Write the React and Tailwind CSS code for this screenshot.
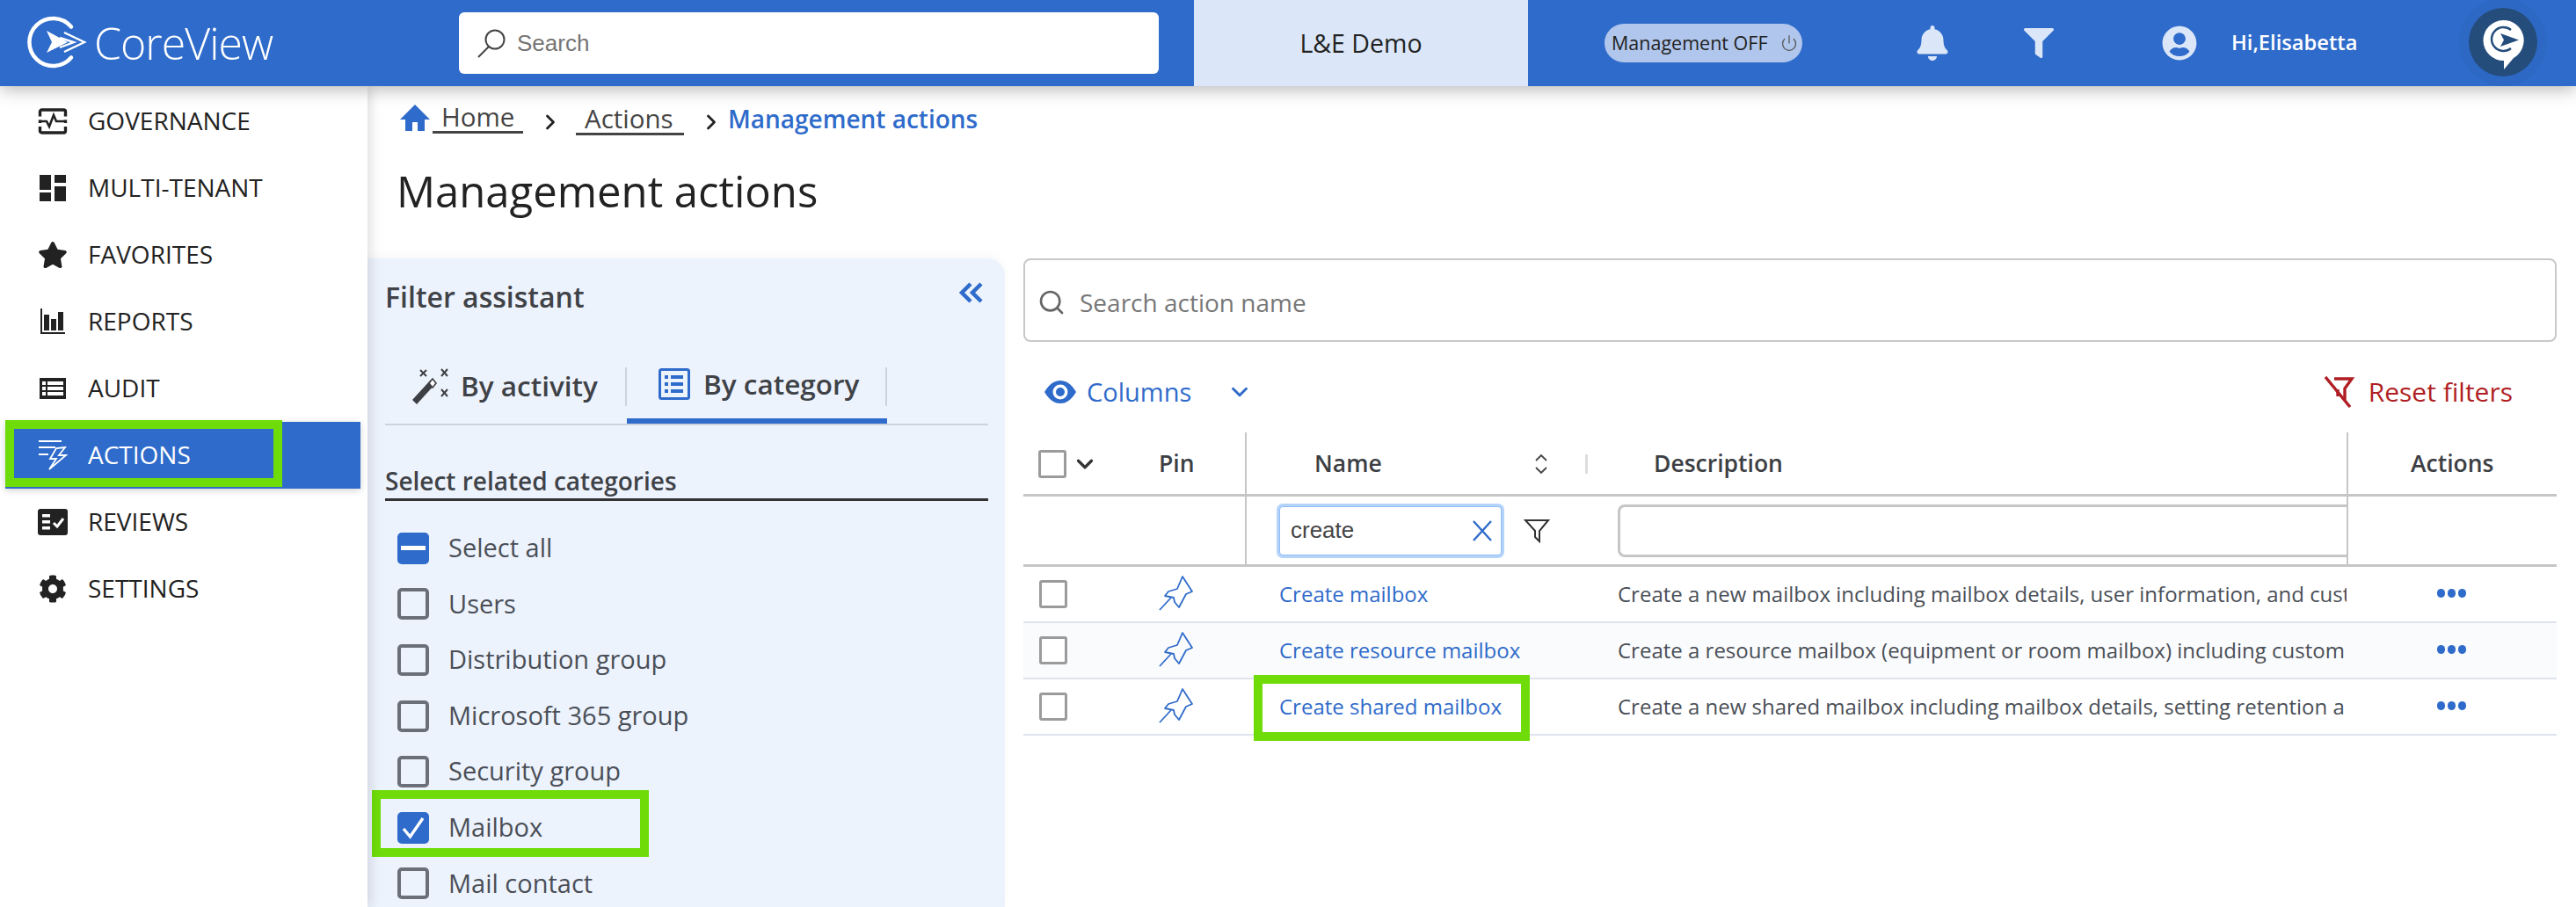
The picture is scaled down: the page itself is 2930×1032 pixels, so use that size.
import React from "react";
import { FaBell, FaFilter, FaUserCircle, FaStar, FaCog } from "react-icons/fa";
import { Power, ChevronRight, ChevronDown, Search } from "lucide-react";

const Logo = () => (
  <svg width="70" height="62" viewBox="0 0 70 62" className="shrink-0" fill="none">
    <path d="M51 12.5 A27 27 0 1 0 51 47.5" stroke="#fff" strokeWidth="4.5" strokeLinecap="round" />
    <path d="M23 17 L47 30 L23 42 L29 30 Z" fill="#fff" />
    <path d="M43 19 L66 30 L43 41 M38 25 L54 30 L38 36" stroke="#fff" strokeWidth="2.4" />
  </svg>
);

const Avatar = () => (
  <div className="w-[100px] h-[100px] -mt-[2px] rounded-full bg-[#2d68c4] flex items-center justify-center shrink-0">
    <div className="w-[78px] h-[78px] rounded-full bg-[#254d7c] flex items-center justify-center">
      <svg width="48" height="58" viewBox="0 0 48 58" className="mt-[6px]">
        <path d="M24 1 A23 23 0 0 1 36 44 L25 57 L25 47 A23 23 0 0 1 24 1 Z" fill="#fff" />
        <path d="M33 12 A13.5 13.5 0 1 0 33 33" fill="none" stroke="#254d7c" strokeWidth="2.5" />
        <path d="M21 16 L42 23.5 L21 31 L25 23.5 Z" fill="#254d7c" />
      </svg>
    </div>
  </div>
);

const Governance = () => (
  <svg width="36" height="36" viewBox="0 0 36 36" fill="none">
    <rect x="3.5" y="5" width="29" height="26" rx="2" stroke="#222" strokeWidth="3.4" />
    <path d="M1 14.5 H6 M1 22 H6 M30 14.5 H35 M30 22 H35" stroke="#fff" strokeWidth="4" />
    <path d="M2 18 H11 L14 24 L19 11 L22 18 H34" stroke="#222" strokeWidth="2.6" fill="none" />
  </svg>
);
const MultiTenant = () => (
  <svg width="36" height="36" viewBox="0 0 36 36" fill="#222">
    <rect x="3" y="3" width="13" height="17" />
    <rect x="20" y="3" width="13" height="9" />
    <rect x="20" y="16" width="13" height="17" />
    <rect x="3" y="23" width="13" height="10" />
  </svg>
);
const Reports = () => (
  <svg width="36" height="36" viewBox="0 0 36 36" fill="#222">
    <rect x="4" y="3" width="2" height="29" />
    <rect x="4" y="30" width="28" height="2" />
    <rect x="8" y="10" width="6" height="18" />
    <rect x="16" y="15" width="6" height="13" />
    <rect x="24" y="7" width="6" height="21" />
  </svg>
);
const Audit = () => (
  <svg width="36" height="36" viewBox="0 0 36 36">
    <rect x="3" y="6" width="30" height="24" fill="#222" />
    <g fill="#fff">
      <rect x="6" y="10" width="4" height="4" />
      <rect x="12" y="10" width="18" height="4" />
      <rect x="6" y="16" width="4" height="4" />
      <rect x="12" y="16" width="18" height="4" />
      <rect x="6" y="22" width="4" height="4" />
      <rect x="12" y="22" width="18" height="4" />
    </g>
  </svg>
);
const ActionsIcon = () => (
  <svg width="36" height="36" viewBox="0 0 36 36" fill="none" stroke="#fff" strokeWidth="1.8">
    <path d="M2 2 H28 M2 9 H21 M2 17 H13" />
    <path d="M32 9 L22 10 L15 22 H22 L14 34 L33 18 H25 Z" />
  </svg>
);
const Reviews = () => (
  <svg width="36" height="36" viewBox="0 0 36 36">
    <rect x="1" y="3" width="34" height="30" rx="3" fill="#222" />
    <g fill="#fff">
      <rect x="6" y="9" width="9" height="3.5" />
      <rect x="6" y="16" width="9" height="3.5" />
      <rect x="6" y="23" width="9" height="3.5" />
    </g>
    <path d="M19 19 L23 23 L30 14" stroke="#fff" strokeWidth="3" fill="none" />
  </svg>
);

const NavRow = ({ icon, label, active, children }) => (
  <div className={`relative h-[76px] flex items-center mr-[8px] ml-[6px] ${active ? "bg-[#2f6bca] shadow-[0_2px_8px_rgba(0,0,0,0.18)]" : ""}`}>
    <span className="w-[36px] h-[36px] ml-[36px] flex items-center justify-center shrink-0">{icon}</span>
    <span className={`ml-[22px] -mt-[2px] text-[28px] ${active ? "text-white" : "text-[#222]"}`}>{label}</span>
    {children}
  </div>
);

const Box = ({ state }) => (
  <span className={`w-[36px] h-[36px] rounded-[5px] shrink-0 flex items-center justify-center ${state ? "bg-[#2f6bca]" : "border-[4px] border-[#6b7078]"}`}>
    {state === "mixed" && <span className="w-[28px] h-[5px] bg-white" />}
    {state === "checked" && (
      <svg width="28" height="28" viewBox="0 0 28 28" fill="none">
        <path d="M3 15 L10.5 24 L25 3" stroke="#fff" strokeWidth="3.4" />
      </svg>
    )}
  </span>
);

const Category = ({ label, state, children }) => (
  <div className="relative h-[63.6px] flex items-center pl-[14px] gap-[22px] text-[29px] text-[#4a4f57]">
    <Box state={state} />
    <span className="-mt-[2px]">{label}</span>
    {children}
  </div>
);

const RowBox = () => <span className="w-[32px] h-[32px] rounded-[3px] border-[3px] border-[#9b9b9b] bg-white shrink-0" />;

const Pin = () => (
  <svg width="40" height="40" viewBox="0 0 40 40" fill="none" stroke="#2f6bca" strokeWidth="1.8" strokeLinejoin="round" className="-mt-[3px]">
    <path d="M27 1 L38 18 L31 21 L23 36 L18 30 L17 25 L7 23 L11 18 L21 15 Z" />
    <path d="M14 25 L1 39" />
  </svg>
);

const Funnel = () => (
  <svg width="30" height="28" viewBox="0 0 30 28" fill="none" stroke="#333" strokeWidth="2">
    <path d="M2 2 H28 L18 14 V26 L13 21 V14 Z" />
  </svg>
);

const Dots = () => (
  <span className="flex gap-[3px] -mt-[3px]">
    <span className="w-[9px] h-[10px] rounded-full bg-[#2f6bca]" />
    <span className="w-[9px] h-[10px] rounded-full bg-[#2f6bca]" />
    <span className="w-[9px] h-[10px] rounded-full bg-[#2f6bca]" />
  </span>
);

const Row = ({ name, desc, zebra, children }) => (
  <div className={`flex h-[64px] items-center border-b-[2px] border-[#dfe3ed] ${zebra ? "bg-[#fafbfc]" : ""}`}>
    <div className="w-[124px] pl-[18px] flex items-center"><RowBox /></div>
    <div className="w-[128px] pl-[30px] flex items-center"><Pin /></div>
    <div className="relative w-[424px] pl-[39px] text-[24px] text-[#2f6bca] h-full flex items-center">
      {name}
      {children}
    </div>
    <div className="w-[829px] text-[24px] text-[#4a4f57] whitespace-nowrap overflow-hidden">{desc}</div>
    <div className="w-[239px] flex items-center pl-[103px]"><Dots /></div>
  </div>
);

export default function App() {
  return (
    <div className="w-[2930px] h-[1032px] overflow-hidden flex flex-col bg-white font-['Open_Sans','DejaVu_Sans',sans-serif] text-[#222]">
      <header className="relative z-20 h-[98px] shrink-0 flex items-center bg-[#2f6bca] shadow-[0_4px_18px_rgba(0,0,0,0.28)]">
        <div className="w-[522px] shrink-0 pl-[30px] flex items-center gap-[7px]">
          <Logo />
          <span className="text-[50px] font-light text-white tracking-[-1px] leading-none">CoreView</span>
        </div>
        <div className="w-[796px] h-[70px] shrink-0 rounded-[6px] bg-white flex items-center pl-[20px] gap-[12px]">
          <svg width="34" height="34" viewBox="0 0 34 34" fill="none" stroke="#444" strokeWidth="2" className="shrink-0">
            <circle cx="21" cy="13" r="10.5" />
            <path d="M14 21 L2 33" />
          </svg>
          <span className="text-[26px] text-[#757575] font-['Liberation_Sans',sans-serif]">Search</span>
        </div>
        <div className="ml-[40px] w-[380px] h-full shrink-0 bg-[#dbe7f8] flex items-center justify-center text-[28.5px] text-[#222]">L&amp;E Demo</div>
        <div className="ml-[87px] w-[225px] h-[44px] shrink-0 rounded-full bg-[#b0c6ec] flex items-center pl-[8px] gap-[14px] text-[21.5px] text-[#222]">
          <span>Management OFF</span>
          <Power className="w-[20px] h-[20px] text-[#555]" strokeWidth={1.5} />
        </div>
        <FaBell className="ml-[130px] w-[36px] h-[40px] text-[#dbe7f8] shrink-0" />
        <FaFilter className="ml-[86px] w-[34px] h-[34px] text-[#dbe7f8] shrink-0" />
        <FaUserCircle className="ml-[123px] w-[40px] h-[40px] text-[#dbe7f8] shrink-0" />
        <span className="ml-[39px] text-[23.7px] font-semibold text-white whitespace-nowrap">Hi,Elisabetta</span>
        <div className="ml-[116px]"><Avatar /></div>
      </header>

      <div className="flex flex-1 min-h-0">
        <aside className="relative z-10 w-[418px] shrink-0 bg-white pt-[2px] shadow-[4px_0_12px_rgba(0,0,0,0.12)]">
          <NavRow icon={<Governance />} label="GOVERNANCE" />
          <NavRow icon={<MultiTenant />} label="MULTI-TENANT" />
          <NavRow icon={<FaStar className="w-[34px] h-[34px] text-[#222]" />} label="FAVORITES" />
          <NavRow icon={<Reports />} label="REPORTS" />
          <NavRow icon={<Audit />} label="AUDIT" />
          <NavRow icon={<ActionsIcon />} label="ACTIONS" active>
            <div className="absolute left-0 top-[-2px] w-[315px] h-[76px] border-[10px] border-[#6fdc0a]" />
          </NavRow>
          <NavRow icon={<Reviews />} label="REVIEWS" />
          <NavRow icon={<FaCog className="w-[32px] h-[32px] text-[#222]" />} label="SETTINGS" />
        </aside>

        <main className="flex-1 min-w-0 flex flex-col">
          <nav className="h-[78px] shrink-0 flex items-start pt-[17px] pl-[36px] text-[#444]">
            <svg width="34" height="30" viewBox="0 0 34 30" fill="#2f6bca" className="mt-[4px] ml-[1px] mr-[1px] shrink-0">
              <path d="M17 0 L34 17 H28 V30 H20 V20 H14 V30 H6 V17 H0 Z" />
            </svg>
            <span className="ml-[2px] px-[10px] w-[103px] h-[37px] border-b-[3px] border-[#444] text-[29.5px] leading-[36px]">Home</span>
            <ChevronRight className="ml-[17px] mt-[10px] w-[28px] h-[28px] text-[#222]" strokeWidth={2.4} />
            <span className="ml-[15px] px-[10px] w-[123px] h-[39px] border-b-[3px] border-[#444] text-[29.5px] leading-[40px] whitespace-nowrap">Actions</span>
            <ChevronRight className="ml-[17px] mt-[10px] w-[28px] h-[28px] text-[#222]" strokeWidth={2.4} />
            <span className="ml-[5px] text-[28px] leading-[40px] font-semibold text-[#2f6bca] whitespace-nowrap">Management actions</span>
          </nav>
          <h1 className="h-[118px] shrink-0 pl-[33px] pt-[5px] text-[49px] leading-[72px] font-normal text-[#222]">Management actions</h1>

          <div className="flex flex-1 min-h-0">
            <section className="w-[725px] shrink-0 rounded-tr-[20px] bg-[#edf3fd] pl-[20px] pr-[19px] shadow-[0_-4px_10px_rgba(0,0,0,0.03)]">
              <div className="h-[90px] flex items-center justify-between pr-[6px]">
                <span className="text-[32px] font-semibold text-[#3f4247] -mt-[2px]">Filter assistant</span>
                <svg width="28" height="24" viewBox="0 0 28 24" fill="none" stroke="#2f6bca" strokeWidth="4.5" className="mb-[12px]">
                  <path d="M14 2 L4 12 L14 22 M26 2 L16 12 L26 22" />
                </svg>
              </div>
              <div className="h-[100px] flex items-end border-b-[2px] border-[#ccd3de]">
                <div className="w-[275px] h-[64px] pb-[20px] flex items-center pl-[30px] relative">
                  <svg width="44" height="44" viewBox="0 0 44 44" className="shrink-0">
                    <path d="M1 37 L22 14 L27 19 L6 42 Z" fill="#3d3f44" />
                    <path d="M20 18 L24 13 L28 18 L24 23 Z" fill="#fff" stroke="#3d3f44" strokeWidth="1.6" />
                    <path d="M10 3 L17 10 M17 3 L10 10 M34 2 L41 10 M41 2 L34 10 M34 25 L41 33 M41 25 L34 33" stroke="#3d3f44" strokeWidth="2" />
                  </svg>
                  <span className="ml-[12px] text-[31.5px] font-semibold text-[#3f4247] whitespace-nowrap -mt-[2px]">By activity</span>
                  <span className="absolute right-0 top-0 bottom-[20px] w-[2px] bg-[#ccd3de]" />
                </div>
                <div className="relative w-[296px] h-[64px] pb-[20px] flex items-center pl-[36px] border-b-[6px] border-[#2f6bca]">
                  <svg width="36" height="36" viewBox="0 0 36 36" className="shrink-0">
                    <rect x="1.5" y="1.5" width="33" height="33" rx="2" fill="#edf3fd" stroke="#2f6bca" strokeWidth="3" />
                    <g fill="#2f6bca">
                      <rect x="7" y="8" width="4" height="4" />
                      <rect x="14" y="8" width="14" height="4" />
                      <rect x="7" y="16" width="4" height="4" />
                      <rect x="14" y="16" width="14" height="4" />
                      <rect x="7" y="24" width="4" height="4" />
                      <rect x="14" y="24" width="14" height="4" />
                    </g>
                  </svg>
                  <span className="ml-[15px] text-[31.5px] font-semibold text-[#3f4247] whitespace-nowrap">By category</span>
                  <span className="absolute right-0 top-0 bottom-[14px] w-[2px] bg-[#ccd3de]" />
                </div>
              </div>
              <div className="mt-[43px] h-[43px] border-b-[3px] border-[#333] text-[28px] leading-[40px] font-semibold text-[#3f4247] whitespace-nowrap">Select related categories</div>
              <div className="mt-[22px]">
                <Category label="Select all" state="mixed" />
                <Category label="Users" />
                <Category label="Distribution group" />
                <Category label="Microsoft 365 group" />
                <Category label="Security group" />
                <Category label="Mailbox" state="checked">
                  <div className="absolute left-[-15px] top-[-11px] w-[315px] h-[76px] border-[10px] border-[#6fdc0a]" />
                </Category>
                <Category label="Mail contact" />
              </div>
            </section>

            <section className="flex-1 min-w-0 pl-[21px] pr-[22px]">
              <div className="h-[95px] rounded-[8px] border-[2px] border-[#c8c8c8] flex items-center pl-[14px] pt-[5px] gap-[16px] text-[28px] text-[#777]">
                <Search className="w-[32px] h-[32px] text-[#666]" strokeWidth={2} />
                <span>Search action name</span>
              </div>
              <div className="h-[103px] flex items-center pl-[24px] pr-[50px] pt-[10px] text-[29px]">
                <svg width="36" height="26" viewBox="0 0 36 26" className="shrink-0">
                  <path d="M0 13 C6 3 12 0 18 0 C24 0 30 3 36 13 C30 23 24 26 18 26 C12 26 6 23 0 13 Z" fill="#2f6bca" />
                  <circle cx="18" cy="13" r="8.5" fill="#fff" />
                  <circle cx="18" cy="13" r="5" fill="#2f6bca" />
                </svg>
                <span className="ml-[12px] text-[#2f6bca]">Columns</span>
                <ChevronDown className="ml-[40px] w-[30px] h-[30px] text-[#2f6bca]" strokeWidth={2.4} />
                <span className="ml-auto flex items-center gap-[15px] text-[#b01e24] text-[30px]">
                  <svg width="36" height="36" viewBox="0 0 36 36" fill="none" stroke="#b01e24" strokeWidth="3.4">
                    <path d="M12 3 H32 L24 14 V27" />
                    <path d="M16 15 V23" />
                    <path d="M2 1 L30 35" />
                  </svg>
                  Reset filters
                </span>
              </div>

              <div className="text-[26.5px] font-semibold text-[#3d3f44]">
                <div className="flex h-[73px] items-center pt-[2px] border-b-[3px] border-[#c6c6c6]">
                  <div className="w-[124px] pl-[17px] flex items-center">
                    <RowBox />
                    <ChevronDown className="ml-[6px] w-[30px] h-[30px] text-[#333]" strokeWidth={2.6} />
                  </div>
                  <div className="w-[128px] pl-[30px]">Pin</div>
                  <div className="w-[424px] h-[calc(100%+2px)] -mt-[2px] border-l-[2px] border-[#c6c6c6] pl-[77px] pt-[2px] flex items-center">
                    <span>Name</span>
                    <svg width="18" height="24" viewBox="0 0 18 24" fill="none" stroke="#444" strokeWidth="1.8" className="ml-[172px] shrink-0">
                      <path d="M3 8 L9 2 L15 8 M3 16 L9 22 L15 16" />
                    </svg>
                    <span className="ml-[41px] w-[3px] h-[22px] bg-[#ddd]" />
                  </div>
                  <div className="w-[829px] pl-[41px]">Description</div>
                  <div className="w-[239px] h-[calc(100%+2px)] -mt-[2px] border-l-[2px] border-[#c6c6c6] pl-[71px] pt-[2px] flex items-center">Actions</div>
                </div>
                <div className="flex h-[80px] border-b-[3px] border-[#c6c6c6]">
                  <div className="w-[252px]" />
                  <div className="w-[424px] border-l-[2px] border-[#c6c6c6] pl-[37px] flex items-center">
                    <div className="w-[253px] h-[56px] rounded-[4px] bg-white border-[1px] border-[#8fbdf5] shadow-[0_0_0_3px_#b4d4fa] flex items-center pl-[12px] pr-[9px] justify-between text-[26px] font-normal text-[#444] font-['Liberation_Sans',sans-serif]">
                      <span>create</span>
                      <svg width="24" height="24" viewBox="0 0 24 24" fill="none" stroke="#2f6bca" strokeWidth="2.4">
                        <path d="M2 1 L22 23 M22 1 L2 23" />
                      </svg>
                    </div>
                    <span className="ml-[25px]"><Funnel /></span>
                  </div>
                  <div className="w-[829px] flex items-center overflow-hidden">
                    <div className="w-full h-[60px] rounded-l-[8px] border-[3px] border-r-0 border-[#c6c6c6]" />
                  </div>
                  <div className="w-[239px] border-l-[2px] border-[#c6c6c6]" />
                </div>
              </div>
              <div className="font-normal">
                <Row name="Create mailbox" desc="Create a new mailbox including mailbox details, user information, and cust" />
                <Row zebra name="Create resource mailbox" desc="Create a resource mailbox (equipment or room mailbox) including custom" />
                <Row name="Create shared mailbox" desc="Create a new shared mailbox including mailbox details, setting retention a">
                  <div className="absolute left-[10px] top-[-5px] w-[314px] h-[75px] border-[10px] border-[#6fdc0a]" />
                </Row>
              </div>
            </section>
          </div>
        </main>
      </div>
    </div>
  );
}
